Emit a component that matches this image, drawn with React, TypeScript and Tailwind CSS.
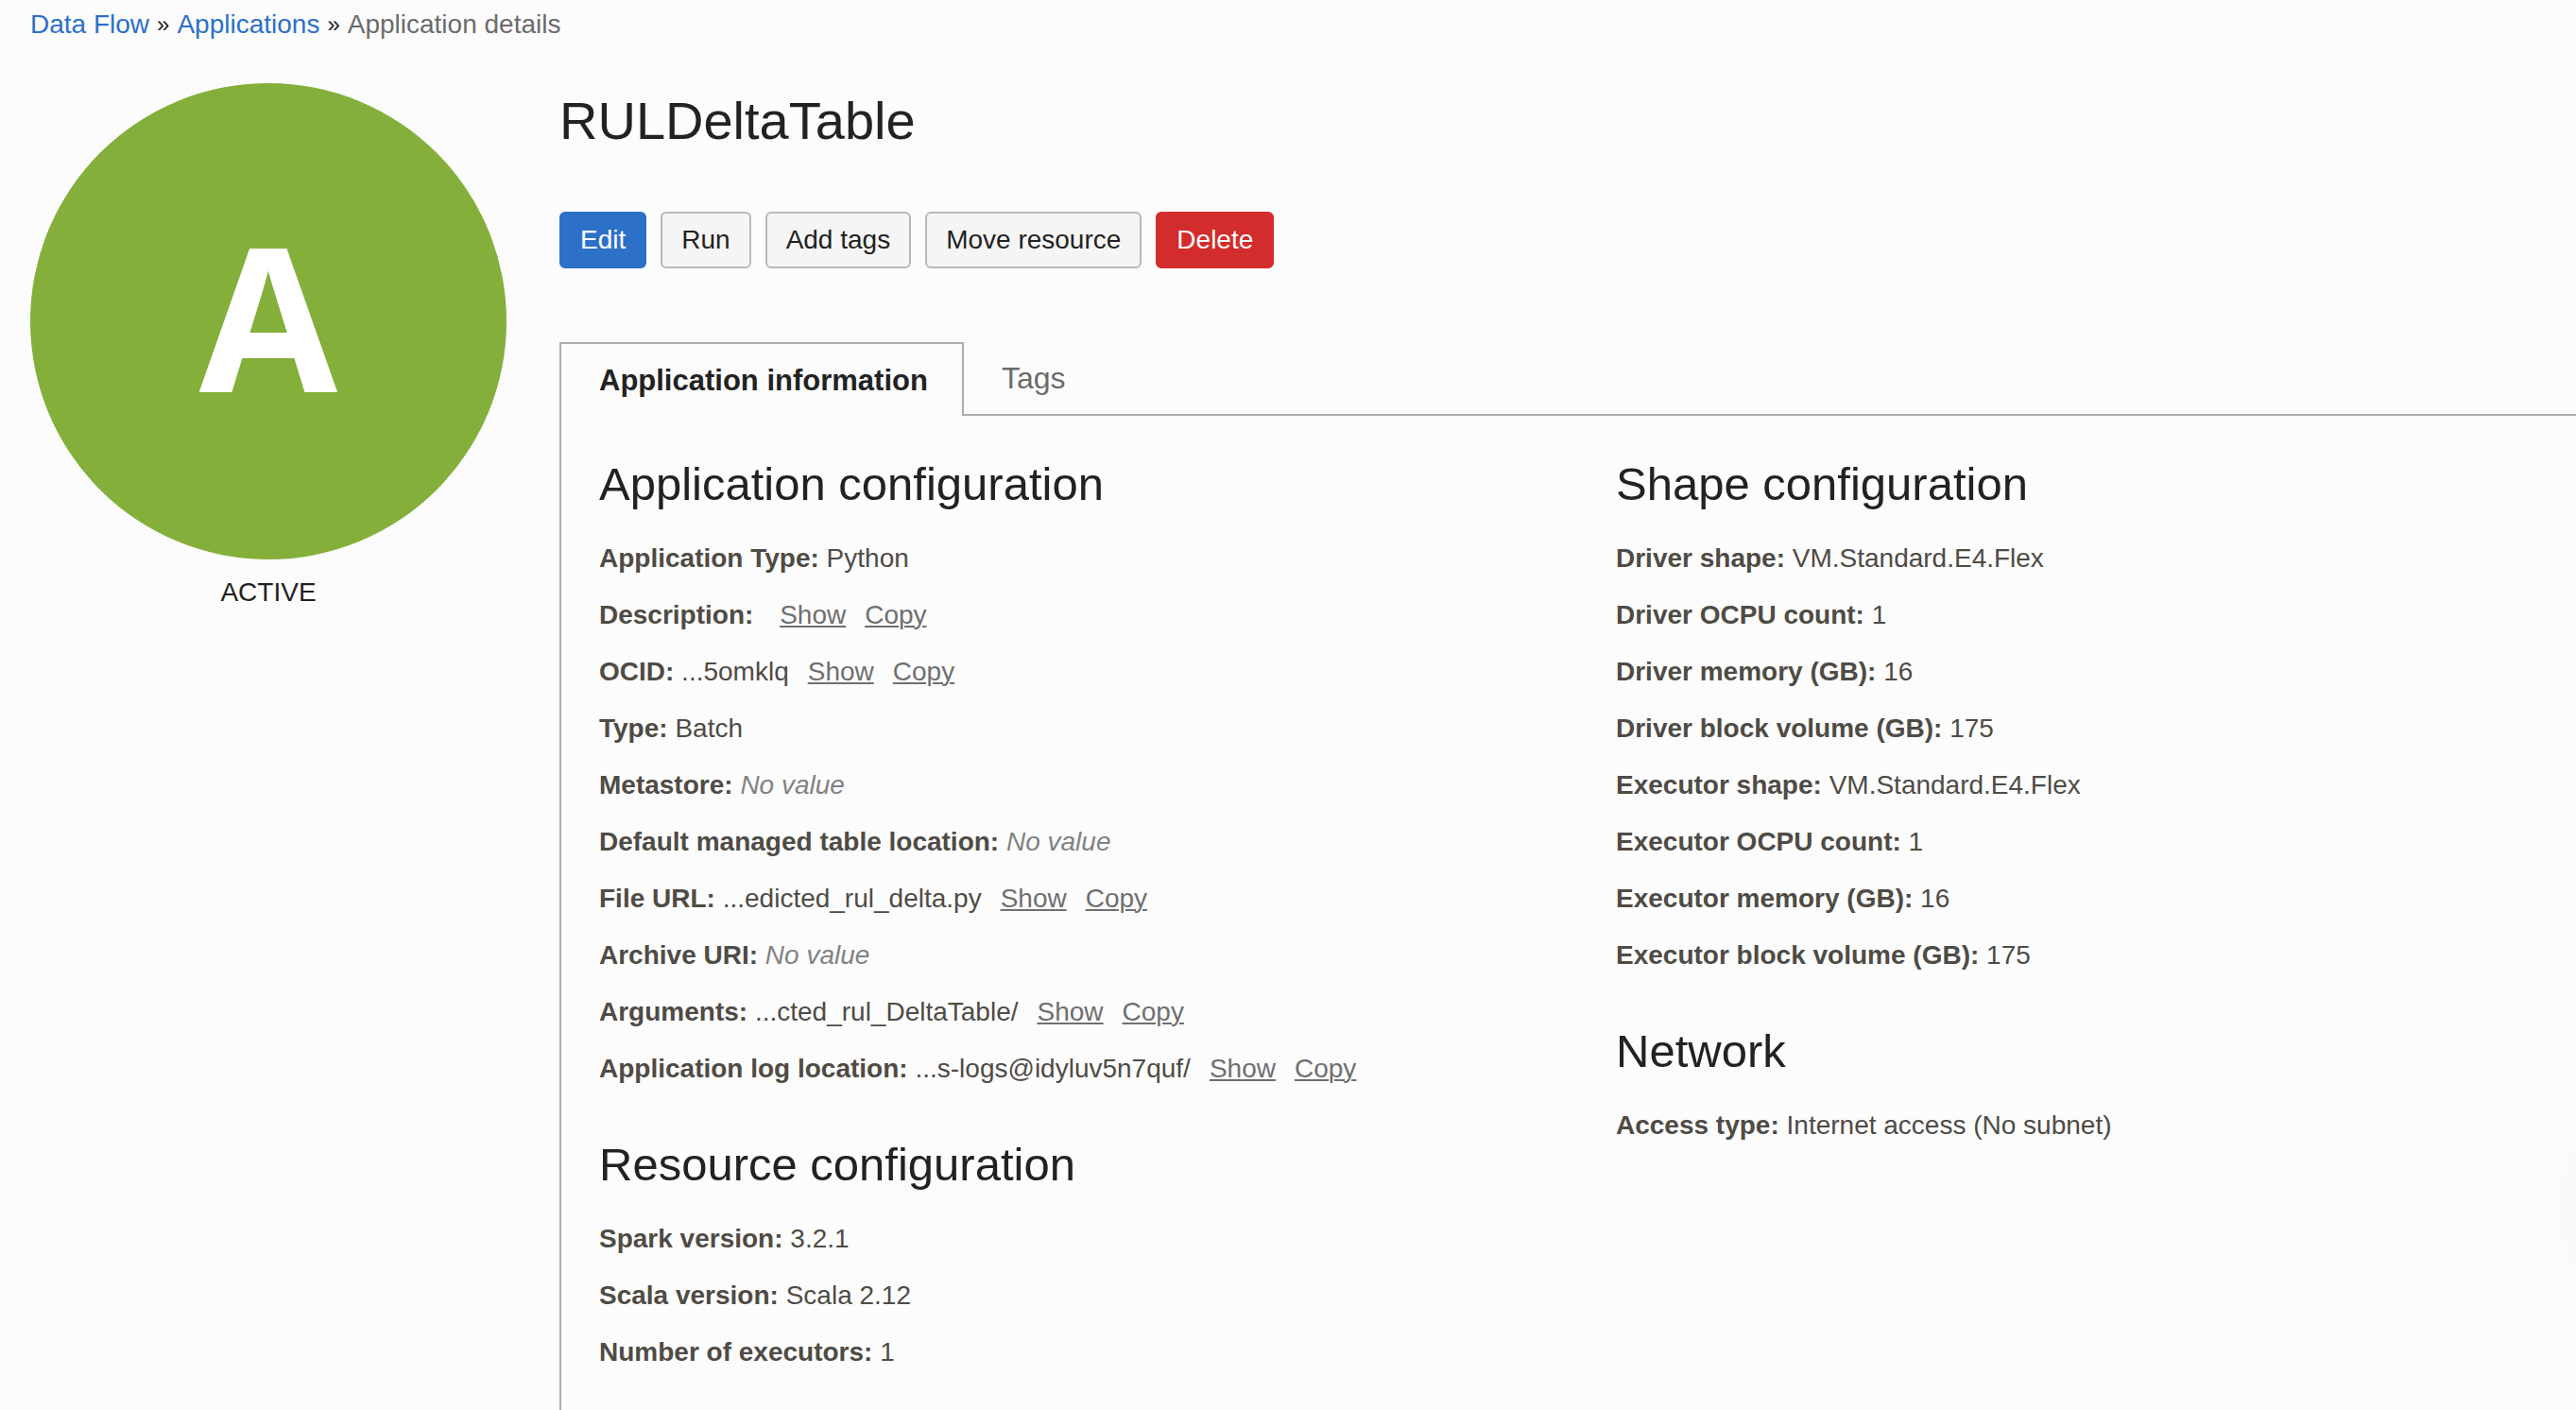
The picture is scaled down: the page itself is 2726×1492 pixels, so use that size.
import type { ReactNode } from "react";

type Field = {
  label: string;
  value?: string;
  empty?: boolean;
  actions?: boolean;
};

const applicationFields: Field[] = [
  { label: "Application Type:", value: "Python" },
  { label: "Description:", actions: true },
  { label: "OCID:", value: "...5omklq", actions: true },
  { label: "Type:", value: "Batch" },
  { label: "Metastore:", empty: true },
  { label: "Default managed table location:", empty: true },
  { label: "File URL:", value: "...edicted_rul_delta.py", actions: true },
  { label: "Archive URI:", empty: true },
  { label: "Arguments:", value: "...cted_rul_DeltaTable/", actions: true },
  { label: "Application log location:", value: "...s-logs@idyluv5n7quf/", actions: true },
];

const resourceFields: Field[] = [
  { label: "Spark version:", value: "3.2.1" },
  { label: "Scala version:", value: "Scala 2.12" },
  { label: "Number of executors:", value: "1" },
];

const shapeFields: Field[] = [
  { label: "Driver shape:", value: "VM.Standard.E4.Flex" },
  { label: "Driver OCPU count:", value: "1" },
  { label: "Driver memory (GB):", value: "16" },
  { label: "Driver block volume (GB):", value: "175" },
  { label: "Executor shape:", value: "VM.Standard.E4.Flex" },
  { label: "Executor OCPU count:", value: "1" },
  { label: "Executor memory (GB):", value: "16" },
  { label: "Executor block volume (GB):", value: "175" },
];

const networkFields: Field[] = [
  { label: "Access type:", value: "Internet access (No subnet)" },
];

function FieldRow({ label, value, empty, actions }: Field) {
  return (
    <div className="leading-[60px] whitespace-nowrap">
      <dt className="inline font-bold">{label}</dt>{" "}
      <dd className="inline">
        {value}
        {empty && <span className="text-[#828282] italic">No value</span>}
        {actions && (
          <>
            <TextLink label="Show" />
            <TextLink label="Copy" />
          </>
        )}
      </dd>
    </div>
  );
}

function TextLink({ label }: { label: string }) {
  return (
    <a href="#" className="ml-5 text-[#6f6f6f] underline decoration-2 underline-offset-2">
      {label}
    </a>
  );
}

function Section({ title, fields }: { title: string; fields: Field[] }) {
  return (
    <section>
      <h2 className="mb-[19px] text-[49px] leading-[60px] text-[#222]">{title}</h2>
      <dl className="text-[#4f4b45]">
        {fields.map((field) => (
          <FieldRow key={field.label} {...field} />
        ))}
      </dl>
    </section>
  );
}

function ActionButton({ tone, children }: { tone: "primary" | "default" | "danger"; children: ReactNode }) {
  const tones = {
    primary: "border-[#2d70c8] bg-[#2d70c8] text-white",
    default: "border-[#b4bac0] bg-[#f5f5f5] text-[#222]",
    danger: "border-[#d32c2c] bg-[#d32c2c] text-white",
  };
  return (
    <button type="button" className={`h-15 rounded-md border-2 px-5 ${tones[tone]}`}>
      {children}
    </button>
  );
}

export default function App() {
  return (
    <div className="relative flex min-h-screen flex-col overflow-hidden bg-[#fcfcfc] pl-8 font-['Liberation_Sans',Arial,sans-serif] text-[28px] text-[#222]">
      <nav aria-label="Breadcrumb" className="flex items-center gap-2 pt-1.5 leading-10">
        <a href="#" className="text-[#2d70c8]">Data Flow</a>
        <span className="text-[24px]">»</span>
        <a href="#" className="text-[#2d70c8]">Applications</a>
        <span className="text-[24px]">»</span>
        <span className="text-[#6b6b6b]">Application details</span>
      </nav>

      <div className="mt-[42px] flex flex-1 gap-14">
        <aside className="w-[504px] shrink-0 text-center">
          <div className="flex aspect-square items-center justify-center rounded-full bg-[#84af3b] pb-3.5 font-['Open_Sans',sans-serif] text-[212px] leading-none font-bold text-white">
            A
          </div>
          <p className="mt-[15px] leading-10">ACTIVE</p>
        </aside>

        <main className="flex min-w-0 flex-1 flex-col pt-2">
          <h1 className="text-[56px] leading-16">RULDeltaTable</h1>

          <div className="mt-16 flex gap-[15px]">
            <ActionButton tone="primary">Edit</ActionButton>
            <ActionButton tone="default">Run</ActionButton>
            <ActionButton tone="default">Add tags</ActionButton>
            <ActionButton tone="default">Move resource</ActionButton>
            <ActionButton tone="danger">Delete</ActionButton>
          </div>

          <div role="tablist" className="mt-[78px] flex h-[78px] items-stretch text-[32px] leading-10">
            <button
              type="button"
              role="tab"
              aria-selected="true"
              className="border-2 border-b-0 border-[#adadad] pt-0.5 pr-9 pl-10 text-[31px] font-bold"
            >
              Application information
            </button>
            <div className="flex-1 border-b-2 border-[#adadad]">
              <button type="button" role="tab" aria-selected="false" className="h-full px-10 text-[#6b6b6b]">
                Tags
              </button>
            </div>
          </div>

          <div role="tabpanel" className="grid flex-1 grid-cols-2 gap-x-15 border-l-2 border-[#adadad] pt-[42px] pb-7 pl-10">
            <div className="flex flex-col gap-[41px]">
              <Section title="Application configuration" fields={applicationFields} />
              <Section title="Resource configuration" fields={resourceFields} />
            </div>
            <div className="flex flex-col gap-[41px]">
              <Section title="Shape configuration" fields={shapeFields} />
              <Section title="Network" fields={networkFields} />
            </div>
          </div>
        </main>
      </div>

      {/* Edge shadow of the collapsed help drawer */}
      <div
        aria-hidden="true"
        className="absolute top-[1210px] -right-10 h-34 w-10 rounded-l-3xl shadow-[0_0_40px_rgba(0,40,30,0.04)]"
      />
    </div>
  );
}
